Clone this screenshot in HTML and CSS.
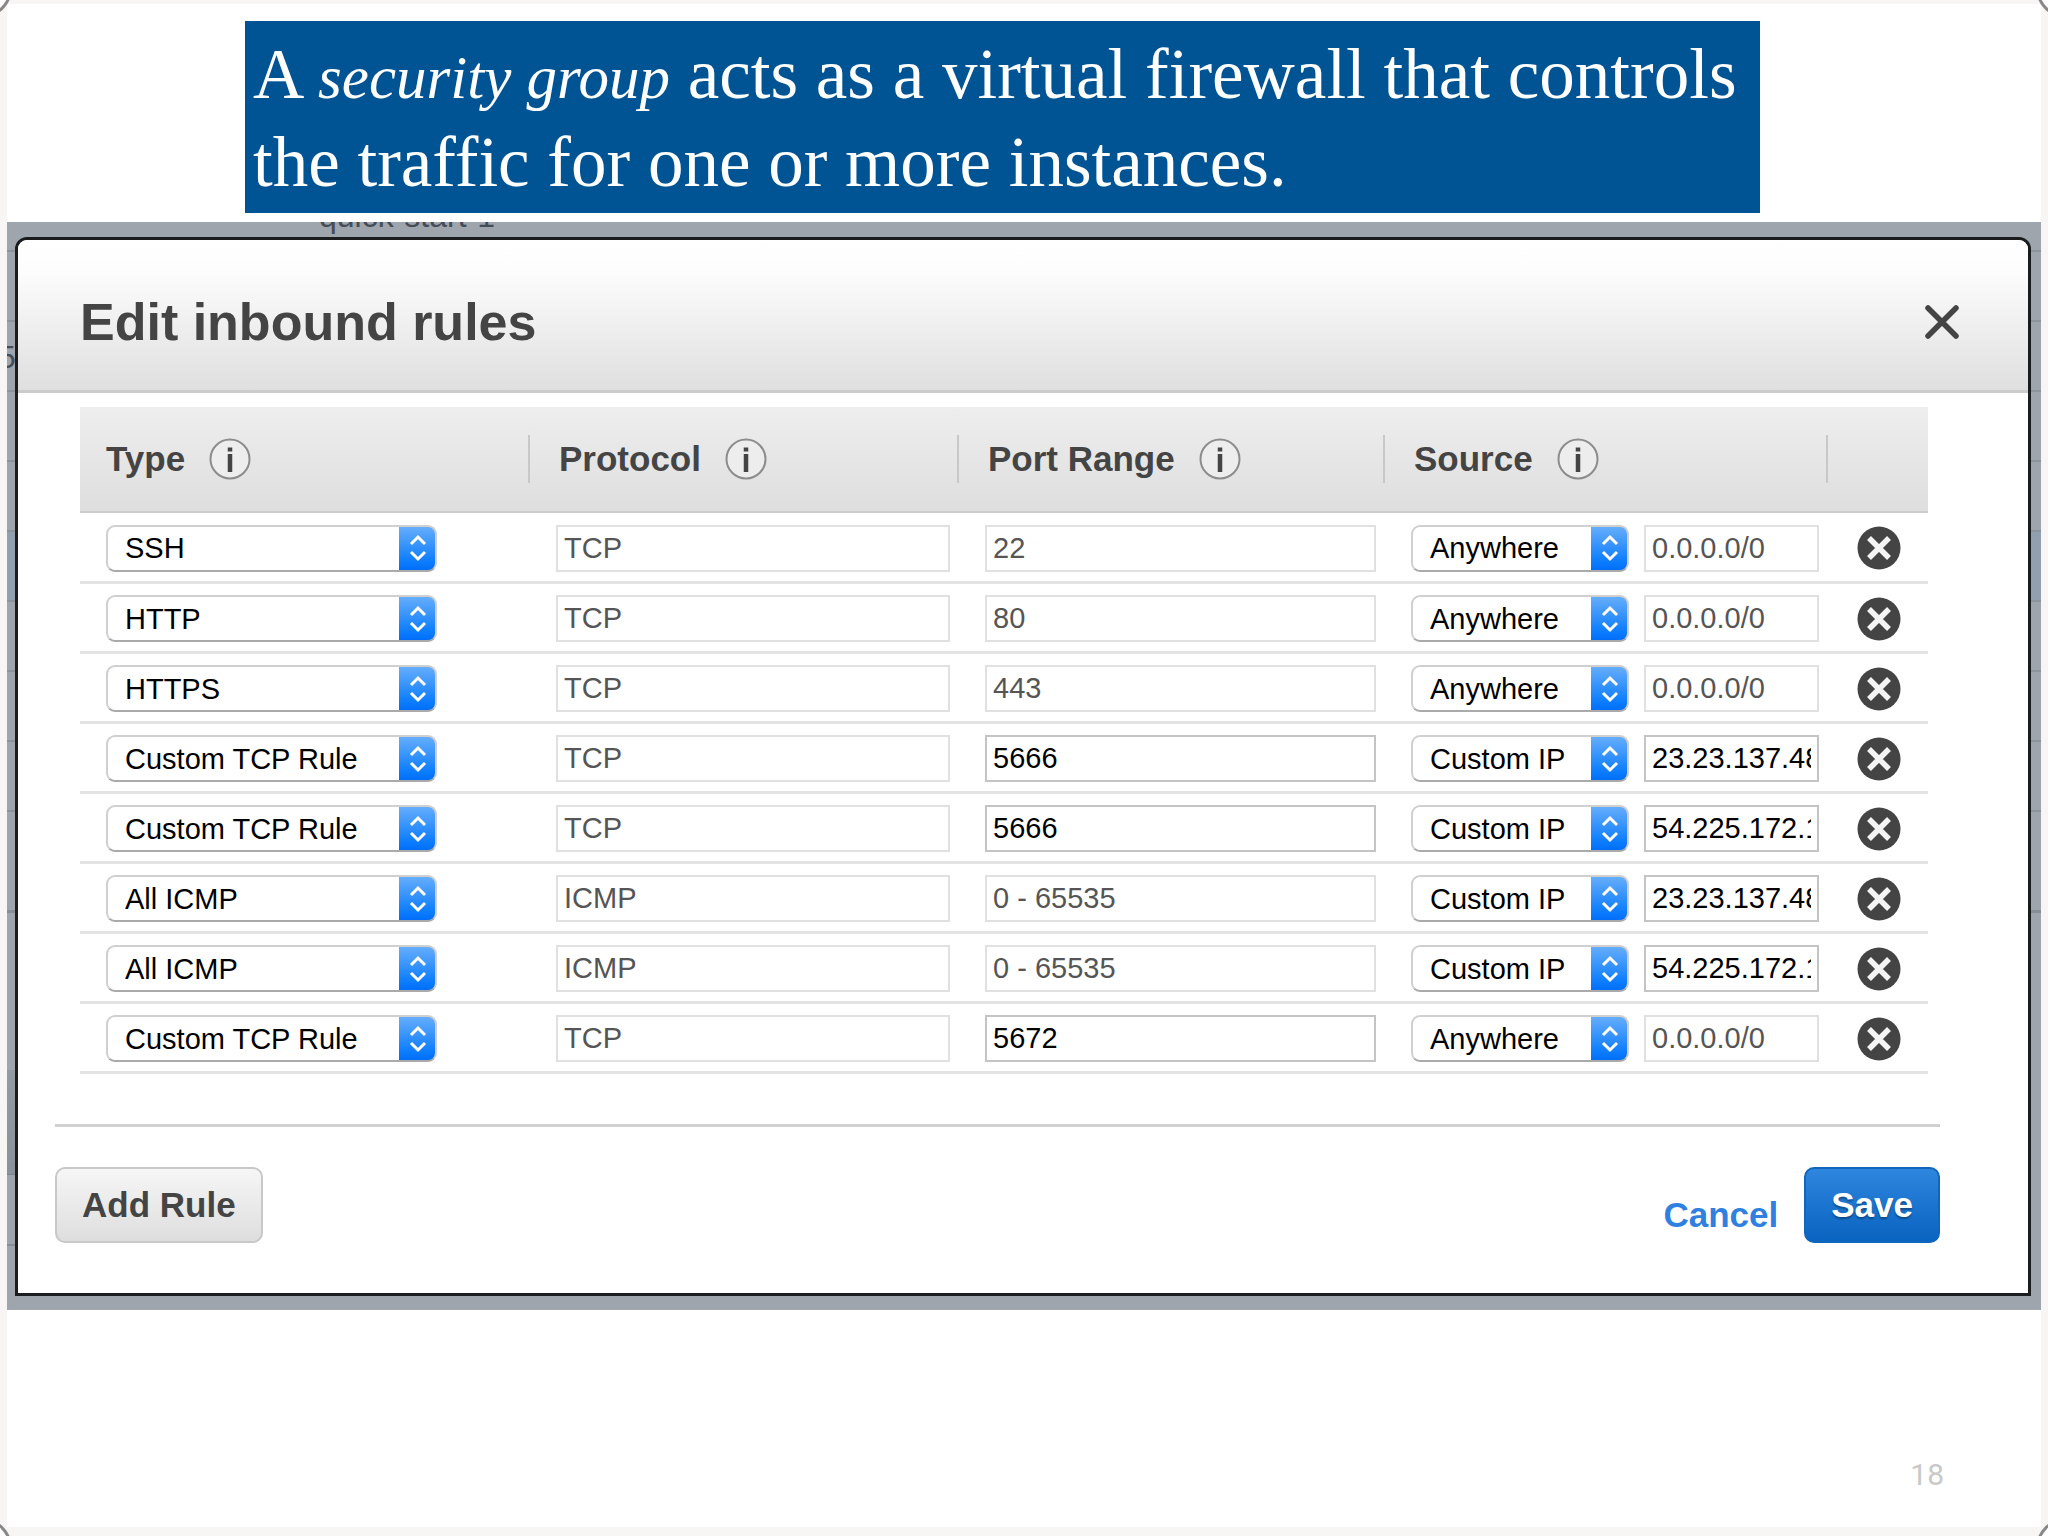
FILE: index.html
```html
<!DOCTYPE html>
<html lang="en">
<head>
<meta charset="utf-8">
<title>Security groups</title>
<link rel="stylesheet" href="styles.css">
</head>
<body>
<svg class="defs" aria-hidden="true">
  <symbol id="info" viewBox="0 0 42 42"><circle cx="21" cy="21" r="19.5" fill="#ededed" stroke="#8c8c8c" stroke-width="2"/><path d="M21 9.500v4M21 16v18" stroke="#444" stroke-width="4.500"/></symbol>
  <symbol id="remove" viewBox="0 0 44 44"><circle cx="22" cy="22" r="21.500" fill="#444"/><path d="M12 12l20 20M32 12l-20 20" stroke="#f4f4f4" stroke-width="5.500"/></symbol>
</svg>
<main class="slide">
  <span class="corner corner-tl"></span><span class="corner corner-tr"></span><span class="corner corner-bl"></span><span class="corner corner-br"></span>
  <p class="banner">A <em>security group</em> acts as a virtual firewall that controls<br>the traffic for one or more instances.</p>
  <section class="backdrop">
    <span class="behind behind-name">quick-start-1</span>
    <span class="behind behind-id">5</span>
    <form class="dialog">
      <header class="dialog-head">
        <h1>Edit inbound rules</h1>
        <button type="button" class="icon-button" aria-label="Close"><svg width="36" height="36" viewBox="0 0 36 36"><path d="M4 4l28 28M32 4L4 32" stroke="#444" stroke-width="5.500" stroke-linecap="round"/></svg></button>
      </header>
      <table class="rules">
        <colgroup><col class="c-type"><col class="c-proto"><col class="c-port"><col class="c-source"><col class="c-remove"></colgroup>
        <thead><tr>
          <th scope="col"><div class="th">Type <svg class="info"><use href="#info"/></svg></div></th>
          <th scope="col"><div class="th">Protocol <svg class="info"><use href="#info"/></svg></div></th>
          <th scope="col"><div class="th">Port Range <svg class="info"><use href="#info"/></svg></div></th>
          <th scope="col"><div class="th">Source <svg class="info"><use href="#info"/></svg></div></th>
          <th><div class="th"></div></th>
        </tr></thead>
        <tbody id="rows"></tbody>
      </table>
      <footer class="dialog-foot">
        <button type="button" class="btn">Add Rule</button>
        <div class="actions"><a class="cancel" href="#">Cancel</a><button type="button" class="btn btn-primary">Save</button></div>
      </footer>
    </form>
  </section>
  <span class="page-number">18</span>
</main>
<script src="rules.js"></script>
</body>
</html>
```
FILE: rules.js
```js
const rules = [
  ["SSH", "TCP", "22", "Anywhere", "0.0.0.0/0"],
  ["HTTP", "TCP", "80", "Anywhere", "0.0.0.0/0"],
  ["HTTPS", "TCP", "443", "Anywhere", "0.0.0.0/0"],
  ["Custom TCP Rule", "TCP", "5666", "Custom IP", "23.23.137.48/32"],
  ["Custom TCP Rule", "TCP", "5666", "Custom IP", "54.225.172.1/32"],
  ["All ICMP", "ICMP", "0 - 65535", "Custom IP", "23.23.137.48/32"],
  ["All ICMP", "ICMP", "0 - 65535", "Custom IP", "54.225.172.1/32"],
  ["Custom TCP Rule", "TCP", "5672", "Anywhere", "0.0.0.0/0"]
];
const select = (label, value) =>
  `<select aria-label="${label}"><option>${value}</option></select>`;
const input = (label, value, editable) =>
  `<input type="text" aria-label="${label}" value="${value}"${editable ? "" : " disabled"}>`;
document.getElementById("rows").innerHTML = rules.map(([type, proto, port, source, ip]) => `
  <tr>
    <td>${select("Type", type)}</td>
    <td>${input("Protocol", proto, false)}</td>
    <td>${input("Port range", port, type.startsWith("Custom"))}</td>
    <td><div class="source">${select("Source", source)}${input("Source address", ip, source === "Custom IP")}</div></td>
    <td class="remove-cell"><button type="button" class="icon-button" aria-label="Remove rule"><svg width="44" height="44"><use href="#remove"/></svg></button></td>
  </tr>`).join("");
```
FILE: styles.css
```css
* { box-sizing: border-box; }
body {
  margin: 0;
  background: #f7f6f4;
  font-family: "Liberation Sans", Arial, sans-serif;
  color: #444;
}
.defs { position: absolute; width: 0; height: 0; }

.slide {
  position: relative;
  display: flex;
  flex-direction: column;
  min-height: 100vh;
  padding: 4px 7px 9px;
  overflow: hidden;
  background: linear-gradient(#fff, #fff) content-box, #f7f6f4;
}
.corner {
  position: absolute;
  width: 60px;
  height: 60px;
  border: 3px solid #888;
  border-radius: 50%;
  background: #fff;
}
.corner-tl { left: -48px; top: -42px; }
.corner-tr { right: -48px; top: -42px; }
.corner-bl { left: -48px; bottom: -42px; }
.corner-br { right: -48px; bottom: -42px; }

.banner {
  width: 1515px;
  max-width: calc(100% - 238px);
  margin: 17px 0 9px 238px;
  padding: 9px 8px 7px;
  background: #005493;
  color: #fff;
  font: 71px/88px "Liberation Serif", "Times New Roman", serif;
}
.banner em { font-size: 61px; line-height: 1; }

/* The dimmed page behind the dialog: its table rules show at both edges. */
.backdrop {
  position: relative;
  padding: 15px 10px 14px 8px;
  overflow: hidden;
  background:
    linear-gradient(#868e96, #868e96) 0 688px / 100% 3px no-repeat,
    linear-gradient(#868e96, #868e96) 0 1022px / 8px 2px no-repeat,
    linear-gradient(#939ba2, #89929a 99%, #7c858c 99%) 0 848px / 8px 105px no-repeat,
    repeating-linear-gradient(transparent 0 28px, #8b939b 28px 30px, transparent 30px 70px) 0 0 / 100% 592px no-repeat,
    linear-gradient(#919fae, #919fae) 0 310px / 100% 70px no-repeat,
    #9ea5ad;
}
.behind { position: absolute; font-size: 32px; line-height: 34px; color: #444c55; }
.behind-name { left: 312px; top: -23px; }
.behind-id { left: -9px; top: 118px; }

.dialog {
  position: relative;
  border: 3px solid #1a1c1e;
  border-radius: 12px 12px 0 0;
  background: #fff;
}
.dialog-head {
  display: flex;
  align-items: center;
  justify-content: space-between;
  height: 153px;
  padding: 14px 68px 0 62px;
  border-bottom: 3px solid #ccc;
  border-radius: 9px 9px 0 0;
  background: linear-gradient(#fff, #fdfdfd 20%, #dfdfdf);
}
h1 { margin: 0; font-size: 52px; line-height: 60px; }
.icon-button { display: block; padding: 0; border: 0; background: none; }
.icon-button svg { display: block; }

.rules {
  width: calc(100% - 162px);
  margin: 14px 100px 0 62px;
  border-collapse: collapse;
  table-layout: fixed;
}
.c-type { width: 450px; }
.c-proto { width: 429px; }
.c-port { width: 426px; }
.c-remove { width: 100px; }
th {
  height: 105px;
  padding: 0;
  border-bottom: 2px solid #ccc;
  background: linear-gradient(#eee, #dedede);
  font-size: 35px;
  text-align: left;
}
.th {
  display: flex;
  align-items: center;
  gap: 24px;
  height: 48px;
  padding-left: 29px;
  border-right: 2px solid #c8c8c8;
  box-shadow: 2px 0 0 #fafafa;
}
th:first-child .th { padding-left: 26px; }
th:nth-child(4) .th { box-shadow: none; }
th:last-child .th { border: 0; box-shadow: none; }
.info { width: 42px; height: 42px; }
td { height: 70px; padding: 3px 9px 0 26px; border-bottom: 3px solid #e3e3e3; }

select, input {
  display: block;
  height: 47px;
  font: 29px/34px "Liberation Sans", Arial, sans-serif;
  color: #000;
}
select {
  width: 331px;
  padding: 0 40px 0 17px;
  appearance: none;
  border: 2px solid #d0d0d0;
  border-bottom-color: #aaa;
  border-radius: 9px;
  background:
    url("data:image/svg+xml,%3Csvg xmlns='http://www.w3.org/2000/svg' viewBox='0 0 38 46'%3E%3Cpath d='M12 19l7-7 7 7M12 27l7 7 7-7' fill='none' stroke='%23fff' stroke-width='3'/%3E%3C/svg%3E") right / 38px 46px no-repeat border-box,
    linear-gradient(#6ab0fb, #0a7bff 80%, #006af5) right / 38px 100% no-repeat border-box,
    #fff;
}
input {
  width: 100%;
  padding: 0 6px;
  border: 2px solid #c4c4c4;
  border-radius: 0;
  background: #fff;
}
input:disabled { border-color: #e0e0e0; color: #555; }
.source { display: flex; gap: 15px; }
.source select { flex: 0 0 218px; }
.source input { min-width: 0; }
td.remove-cell { padding: 3px 0 0 29px; }

.dialog-foot {
  display: flex;
  justify-content: space-between;
  margin: 50px 88px 0 37px;
  padding: 40px 0 50px;
  border-top: 3px solid #d0d0d0;
}
.actions { display: flex; align-items: flex-start; gap: 26px; }
.btn, .cancel { font: bold 35px/40px "Liberation Sans", Arial, sans-serif; }
.btn {
  height: 76px;
  padding: 0 25px;
  border: 2px solid #c8c8c8;
  border-radius: 10px;
  background: linear-gradient(#f6f6f6, #dedede);
  color: #444;
}
.btn-primary {
  border-color: #1166bb;
  background: linear-gradient(#2e86de, #0963c0);
  color: #fff;
  text-shadow: 0 2px 2px #00000055;
}
.cancel { padding-top: 28px; color: #2f80e0; text-decoration: none; }

.page-number {
  margin: auto 97px 34px auto;
  color: #c8c8c8;
  font: 30px/36px "Liberation Sans Narrow", Roboto, sans-serif;
}
```
